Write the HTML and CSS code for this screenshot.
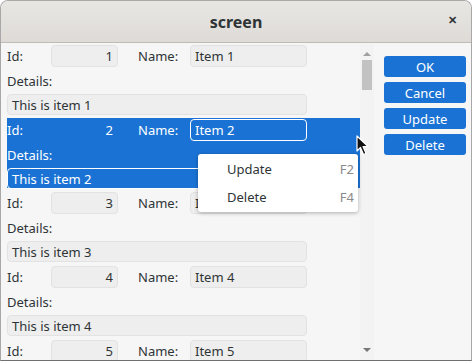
FILE: index.html
```html
<!DOCTYPE html>
<html lang="en">
<head>
    <meta charset="UTF-8">
    <title>screen</title>
    <link rel="stylesheet" href="styles.css">
</head>
<body>
    <div class="window">
        <div class="window__title">
            <span class="window__name">screen</span>
            <span class="window__close">&#x2715;</span>
        </div>
        <div class="window__body">
            <div class="list">
                <div class="list__rows">
                    <div class="item">
                        <div class="item__line">
                            <span class="item__label">Id:</span>
                            <span class="field field--id">1</span>
                            <span class="item__label item__label--name">Name:</span>
                            <span class="field field--name">Item 1</span>
                        </div>
                        <div class="item__label item__details">Details:</div>
                        <span class="field field--details">This is item 1</span>
                    </div>
                    <div class="item item--selected">
                        <div class="item__line">
                            <span class="item__label">Id:</span>
                            <span class="field field--id">2</span>
                            <span class="item__label item__label--name">Name:</span>
                            <span class="field field--name">Item 2</span>
                        </div>
                        <div class="item__label item__details">Details:</div>
                        <span class="field field--details">This is item 2</span>
                    </div>
                    <div class="item">
                        <div class="item__line">
                            <span class="item__label">Id:</span>
                            <span class="field field--id">3</span>
                            <span class="item__label item__label--name">Name:</span>
                            <span class="field field--name">Item 3</span>
                        </div>
                        <div class="item__label item__details">Details:</div>
                        <span class="field field--details">This is item 3</span>
                    </div>
                    <div class="item">
                        <div class="item__line">
                            <span class="item__label">Id:</span>
                            <span class="field field--id">4</span>
                            <span class="item__label item__label--name">Name:</span>
                            <span class="field field--name">Item 4</span>
                        </div>
                        <div class="item__label item__details">Details:</div>
                        <span class="field field--details">This is item 4</span>
                    </div>
                    <div class="item">
                        <div class="item__line">
                            <span class="item__label">Id:</span>
                            <span class="field field--id">5</span>
                            <span class="item__label item__label--name">Name:</span>
                            <span class="field field--name">Item 5</span>
                        </div>
                    </div>
                </div>
                <div class="scrollbar">
                    <span class="scrollbar__arrow scrollbar__arrow--up"></span>
                    <span class="scrollbar__thumb"></span>
                    <span class="scrollbar__arrow scrollbar__arrow--down"></span>
                </div>
            </div>
            <div class="actions">
                <button class="action__btn">OK</button>
                <button class="action__btn">Cancel</button>
                <button class="action__btn">Update</button>
                <button class="action__btn">Delete</button>
            </div>
        </div>

        <!-- popup menu of the selected row -->
        <div class="menu">
            <div class="menu__item"><span>Update</span><span class="menu__key">F2</span></div>
            <div class="menu__item"><span>Delete</span><span class="menu__key">F4</span></div>
        </div>

        <svg class="cursor" width="14" height="22" viewBox="0 0 14 22">
            <path d="M1 1 L1 16 L4.5 12.5 L7.5 19.5 L10 18.5 L7 11.5 L12 11.5 Z" fill="#111" stroke="#fff" stroke-width="1.2" stroke-linejoin="round"/>
        </svg>
    </div>
</body>
</html>
```

FILE: styles.css
```css
body {
    margin: 0;
    background: #fff;
    font-family: 'Noto Sans', 'Open Sans', sans-serif;
    font-size: 13px;
    color: #2e3436;
}
.window {
    position: relative;
    width: 472px;
    height: 361px;
    box-sizing: border-box;
    border: 1px solid #a8a8a8;
    border-bottom-color: #707070;
    border-radius: 8px 8px 0 0;
    background: #f6f6f6;
    overflow: hidden;
    display: flex;
    flex-direction: column;
}
.window__title {
    height: 41px;
    flex-shrink: 0;
    background: linear-gradient(#e8e6e3, #dedbd7);
    border-bottom: 1px solid #bfbcb8;
    display: flex;
    align-items: center;
    justify-content: center;
    position: relative;
}
.window__name {
    font-weight: bold;
    font-size: 16px;
    color: #2e3436;
}
.window__close {
    position: absolute;
    right: 14px;
    top: 11px;
    font-size: 11px;
    font-weight: bold;
    color: #2e3436;
}
.window__body {
    flex: 1;
    display: flex;
    padding: 1px 0 0 6px;
    min-height: 0;
}
.list {
    display: flex;
    width: 367px;
    min-height: 0;
}
.list__rows {
    width: 353px;
    overflow: hidden;
}
.item {
    height: 70.67px;
    margin-bottom: 3px;
    padding-top: 1px;
    box-sizing: border-box;
    position: relative;
}
.item__line {
    display: flex;
    align-items: center;
    height: 22px;
}
.item__label {
    color: #2e3436;
}
.item__line .item__label:first-child {
    width: 44px;
}
.item__label--name {
    margin-left: 20px;
    width: 52px;
}
.item__details {
    height: 26px;
    line-height: 28px;
}
.field {
    display: block;
    height: 22px;
    line-height: 21px;
    box-sizing: border-box;
    background: #eeeeee;
    border: 1px solid #e2e2e2;
    border-radius: 4px;
    padding: 0 4px;
}
.field--id {
    width: 67px;
    text-align: right;
}
.field--name {
    width: 117px;
}
.field--details {
    width: 300px;
    height: 21px;
    line-height: 20px;
    margin-top: 1px;
}
.item--selected {
    background: #1a73d4;
    color: #fff;
}
.item--selected .item__label {
    color: #fff;
}
.item--selected .field {
    background: transparent;
    border-color: transparent;
    color: #fff;
}
.item--selected .field--name,
.item--selected .field--details {
    border-color: #fff;
}
.scrollbar {
    width: 14px;
    position: relative;
    background: #f3f3f3;
}
.scrollbar__arrow {
    position: absolute;
    left: 3px;
    width: 0;
    height: 0;
    border-left: 4px solid transparent;
    border-right: 4px solid transparent;
}
.scrollbar__arrow--up {
    top: 8px;
    border-bottom: 4px solid #a0a0a0;
}
.scrollbar__arrow--down {
    bottom: 8px;
    border-top: 4px solid #777;
}
.scrollbar__thumb {
    position: absolute;
    left: 2px;
    top: 16px;
    width: 10px;
    height: 30px;
    background: #c2c2c2;
}
.actions {
    display: flex;
    flex-direction: column;
    gap: 5px;
    margin-left: 10px;
    padding-top: 12px;
}
.action__btn {
    width: 82px;
    height: 21px;
    border: none;
    border-radius: 3px;
    background: #1a73d4;
    color: #fff;
    font-family: 'Noto Sans', 'Open Sans', sans-serif;
    font-size: 13px;
    padding: 0;
}
.menu {
    position: absolute;
    left: 197px;
    top: 153px;
    width: 160px;
    padding: 1px 0;
    background: #fff;
    border-radius: 3px;
    box-shadow: 0 1px 4px rgba(0, 0, 0, 0.3);
}
.menu__item {
    display: flex;
    justify-content: space-between;
    height: 28px;
    line-height: 28px;
    padding: 0 4px 0 29px;
    color: #2e3436;
}
.menu__key {
    color: #8a8a8a;
}
.cursor {
    position: absolute;
    left: 355px;
    top: 134px;
}
```
